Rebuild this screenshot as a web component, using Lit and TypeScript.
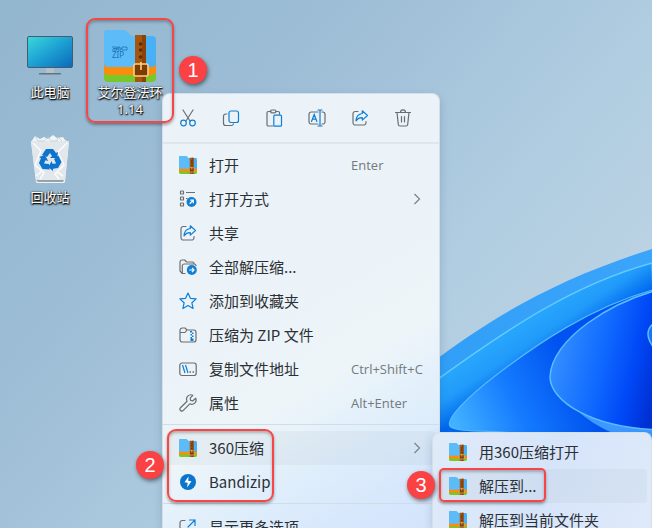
import { LitElement, html, svg, css, nothing, TemplateResult } from "lit";
import { customElement, property } from "lit/decorators.js";

const G = "#6a6e71";
const B = "#0f7fd6";

const zipFolder = svg`
  <path d="M0 4a4 4 0 0 1 4-4h15q2 0 3.500 1.500l3 3q1.500 1.500 3.500 1.500h19a4 4 0 0 1 4 4v30H0z" fill="#48b0f4"/>
  <path d="M0 4a4 4 0 0 1 4-4h15q2 0 3.500 1.500l3 3q1.500 1.500 3.500 1.500h6v34H0z" fill="#5cbcf7"/>
  <path d="M0 42h52v6a4 4 0 0 1-4 4H4a4 4 0 0 1-4-4z" fill="#79c82b"/>
  <path d="M0 33q0 4 4 4h44q4 0 4-4v8q0 4-4 4H4q-4 0-4-4z" fill="#fb8c0c"/>
  <path d="M31 5h11v47H31z" fill="#a5560f"/>
  <path d="M38 5h4v47h-4z" fill="#8c430a"/>
  <circle cx="36.500" cy="14" r="1.800" fill="#5f2c05"/><circle cx="36.500" cy="20" r="1.800" fill="#5f2c05"/><circle cx="36.500" cy="27" r="1.800" fill="#5f2c05"/>
  <rect x="30" y="34" width="14" height="12" rx="1.500" fill="#7c3c08" stroke="#ffd27a" stroke-width="1.600"/>
  <path d="M37 32v8" stroke="#ffd27a" stroke-width="1.600"/>`;

const share = svg`<g fill="none" stroke-width="1.200" stroke-linejoin="round" stroke-linecap="round">
  <path d="M7 2.500H4.200A2.200 2.200 0 0 0 2 4.700v9A2.300 2.300 0 0 0 4.300 16h8.400a2.300 2.300 0 0 0 2.300-2.300V12.500" stroke="${G}"/>
  <path d="M11.300 1.800 16.500 6.500l-5.200 4.600V8.600C8.500 8.500 6.600 9.500 5 11.800 5.300 7.600 7.700 4.900 11.300 4.500z" stroke="${B}"/></g>`;

const icons: Record<string, TemplateResult> = {
  zip: svg`<g transform="scale(.346)">${zipFolder}</g>`,
  cut: svg`<g fill="none" stroke-width="1.200" stroke-linecap="round"><path d="M4 1l7.200 11.200M14 1 6.800 12.200" stroke="${G}"/><circle cx="4.500" cy="14" r="2.800" stroke="${B}"/><circle cx="13.500" cy="14" r="2.800" stroke="${B}"/></g>`,
  copy: svg`<g fill="none" stroke-width="1.200"><path d="M5 5H3.800A2.300 2.300 0 0 0 1.500 7.300v6.900a2.300 2.300 0 0 0 2.300 2.300h5.400a2.300 2.300 0 0 0 2.300-1.700" stroke="${G}" stroke-linecap="round"/><rect x="7" y="2" width="9.500" height="11.500" rx="2" stroke="${B}"/></g>`,
  paste: svg`<g fill="none" stroke-width="1.200"><path d="M6 2.500H3.300A1.300 1.300 0 0 0 2 3.800v11.900A1.300 1.300 0 0 0 3.300 17H8M11 2.500h2.200A1.300 1.300 0 0 1 14.500 3.800v1.500" stroke="${G}" stroke-linecap="round"/><rect x="5.500" y="1" width="5.500" height="2.800" rx="1.200" stroke="${G}"/><rect x="8.800" y="6.200" width="7.700" height="11" rx="1" stroke="${B}"/></g>`,
  rename: svg`<g fill="none" stroke-width="1.200" stroke-linecap="round"><path d="M10 3H3.300A2.300 2.300 0 0 0 1 5.300v7.400A2.300 2.300 0 0 0 3.300 15H10M14 3h.7A2.300 2.300 0 0 1 17 5.300v7.400A2.300 2.300 0 0 1 14.700 15H14" stroke="${G}"/><path d="M12 1v16M10 1h4M10 17h4M3.500 12.500 6.200 5.500 8.900 12.500M4.500 10.200h3.400" stroke="${B}"/></g>`,
  share,
  trash: svg`<g fill="none" stroke="${G}" stroke-width="1.200" stroke-linecap="round" stroke-linejoin="round"><path d="M1.500 3.500h15M6.500 3.300C6.500 0 11.500 0 11.500 3.300M3 3.500l1.300 12A1.700 1.700 0 0 0 6 17h6a1.700 1.700 0 0 0 1.700-1.500l1.300-12M7.500 7.500v5.500M10.500 7.500v5.500"/></g>`,
  openWith: svg`<g fill="none" stroke="${G}" stroke-width="1.200"><rect x="1.500" y="1" width="3" height="3" rx=".6"/><rect x="1.500" y="7" width="3" height="3" rx=".6"/><rect x="1.500" y="13" width="3" height="3" rx=".6"/><path d="M7 2.500h9M7 8.500h1.500"/></g><circle cx="12.500" cy="12" r="5" fill="${B}"/><path d="M10.700 13.800l3.400-3.400M11.300 10.200h3v3" fill="none" stroke="#fff" stroke-width="1.300"/>`,
  extract: svg`<g fill="none" stroke="${G}" stroke-width="1.200" stroke-linejoin="round"><path d="M6.500 15.500H3.300L1 13V4a2 2 0 0 1 2-2h2.700L7.500 4h6A1.500 1.500 0 0 1 15 5.500V6"/><path d="M3.300 15.500V8a2 2 0 0 1 2-2H15a2 2 0 0 1 2 2"/></g><circle cx="12.800" cy="12" r="5" fill="${B}"/><path d="M10.300 12h4.600M13 9.900l2 2.100-2 2.100" fill="none" stroke="#fff" stroke-width="1.200"/>`,
  star: svg`<path d="M9 1l2.400 5.300 5.800.6-4.300 3.900 1.200 5.700L9 13.600l-5.100 2.900 1.200-5.700L.8 6.900l5.800-.6z" fill="none" stroke="${B}" stroke-width="1.200" stroke-linejoin="round"/>`,
  toZip: svg`<path d="M1 4.300A2.300 2.300 0 0 1 3.300 2H6l2 2h6.700A2.300 2.300 0 0 1 17 6.300v7.400a2.300 2.300 0 0 1-2.300 2.300H3.300A2.300 2.300 0 0 1 1 13.700zM1 6.500h5L8 4" fill="none" stroke="${G}" stroke-width="1.200" stroke-linejoin="round"/><path d="M11 5h2v1.500h1.500V8H13v1.500h1.500V11H13v1.500h1.500V15h-3v-4H13V9.500h-1.500V8H13V6.500h-2z" fill="${B}"/>`,
  path: svg`<rect x=".8" y="3" width="16.400" height="12.500" rx="2.200" fill="none" stroke="${G}" stroke-width="1.200"/><path d="M3.500 5l2.500 8M6.500 5 9 13" stroke="${B}" stroke-width="1.200"/><path d="M10.500 12h1.500M13.500 12H15" stroke="${G}" stroke-width="1.400"/>`,
  wrench: svg`<path d="M16.700 4.200a4.300 4.300 0 0 1-5.900 5.600l-6.500 6.600a1.900 1.900 0 0 1-2.800-2.700l6.600-6.500A4.300 4.300 0 0 1 13.800 1.300L11.200 4.100l.4 2.300 2.300.4z" fill="none" stroke="${G}" stroke-width="1.200" stroke-linejoin="round"/>`,
  bandizip: svg`<circle cx="9" cy="9" r="8" fill="#0b74cc"/><path d="M9.500 3.500 5.500 9.200l3.200.5-.6 4.800 4.400-6.200-3.200-.5z" fill="#fff"/>`,
  more: svg`<g fill="none" stroke-width="1.200" stroke-linecap="round"><path d="M6 2.500H3.300A2.300 2.300 0 0 0 1 4.800v9.900A2.300 2.300 0 0 0 3.300 17h9.900a2.300 2.300 0 0 0 2.300-2.300V12" stroke="${G}"/><path d="M9 9l7-7M10.500 2H16v5.500" stroke="${B}"/></g>`,
  chevron: svg`<path d="M9.500 4l5 5-5 5" fill="none" stroke="#7c8185" stroke-width="1.200"/>`,
};

@customElement("ui-icon")
class UiIcon extends LitElement {
  @property() name = "";
  static styles = css`
    :host { display: block; width: 18px; height: 18px; }
    .glyph { display: block; width: 100%; height: 100%; }
  `;
  render() {
    return html`<svg class="glyph" viewBox="0 0 18 18" aria-hidden="true">${icons[this.name]}</svg>`;
  }
}

interface Item { icon: string; label: string; key?: string; sub?: boolean; active?: boolean; }

const fileItems: Item[] = [
  { icon: "zip", label: "打开", key: "Enter" },
  { icon: "openWith", label: "打开方式", sub: true },
  { icon: "share", label: "共享" },
  { icon: "extract", label: "全部解压缩..." },
  { icon: "star", label: "添加到收藏夹" },
  { icon: "toZip", label: "压缩为 ZIP 文件" },
  { icon: "path", label: "复制文件地址", key: "Ctrl+Shift+C" },
  { icon: "wrench", label: "属性", key: "Alt+Enter" },
];
const archiverItems: Item[] = [
  { icon: "zip", label: "360压缩", sub: true, active: true },
  { icon: "bandizip", label: "Bandizip" },
];
const moreItems: Item[] = [{ icon: "more", label: "显示更多选项" }];
const subItems: Item[] = [
  { icon: "zip", label: "用360压缩打开" },
  { icon: "zip", label: "解压到...", active: true },
  { icon: "zip", label: "解压到当前文件夹" },
];
const tools = [
  ["cut", "剪切"], ["copy", "复制"], ["paste", "粘贴"],
  ["rename", "重命名"], ["share", "共享"], ["trash", "删除"],
];

@customElement("app-root")
class AppRoot extends LitElement {
  static styles = css`
    :host {
      display: block; position: relative; min-height: 100vh; overflow: hidden;
      font: 15px/20px "Noto Sans CJK SC", sans-serif; color: #2b3035;
    }
    button { border: 0; padding: 0; margin: 0; background: none; font: inherit; color: inherit; }
    .wallpaper { position: absolute; inset: 0; width: 100%; height: 100%; }
    .desktop {
      position: relative; display: grid; grid-template-columns: 80px 80px;
      grid-auto-rows: 105px; padding: 28px 10px;
    }
    .shortcut {
      display: flex; flex-direction: column; align-items: center; justify-content: flex-start; gap: 2px;
      font: 13px/17px "Noto Sans", "Noto Sans CJK SC", sans-serif; color: #fff;
      text-shadow: 0 1px 2px #000, 1px 1px 1px #222, 0 0 2px #333;
    }
    .caption { display: flex; flex-direction: column; align-items: center; }
    .art { width: 54px; height: 54px; text-shadow: none; }
    .mark { font: 8px "Noto Sans", sans-serif; fill: #1c71b4; }
    .menu {
      position: absolute; box-sizing: border-box; border: 1px solid #d3e0e8; border-bottom: 0; border-radius: 8px 8px 0 0;
      box-shadow: 0 4px 10px rgb(40 70 110 / 22%);
    }
    .context {
      left: 162px; top: 93px; bottom: 0; width: 278px;
      background: linear-gradient(150deg, #ebf3f8 0 45%, #edf5f9 64%, #dfeefb 78%, #d6e6fc 92%, #d4e5fb);
    }
    .submenu {
      left: 432px; top: 432px; bottom: 0; width: 220px; padding: 2px 4px;
      background: linear-gradient(110deg, #e0ebf9, #d6e4fa 50%, #deeafa);
    }
    .tools { display: grid; grid-template-columns: repeat(6, 43px); padding: 0 3px; height: 48px; border-bottom: 2px solid #dde6eb; }
    .tool { display: grid; place-items: center; }
    .group { padding: 4px; }
    .group + .group { padding-top: 6px; border-top: 1px solid #cfdde7; }
    .row {
      display: grid; grid-template-columns: 18px 1fr auto; column-gap: 12px; align-items: center;
      width: 100%; height: 34px; padding: 0 12px; text-align: left; border-radius: 4px; white-space: nowrap;
    }
    .active { background: rgb(80 90 100 / 5%); }
    .key { width: 72px; font: 13px/20px "Open Sans", "Noto Sans", sans-serif; color: #73797d; }
    .callout {
      position: absolute; box-sizing: border-box; border: 2px solid #f84545; border-radius: 9px;
      box-shadow: 0 2px 3px rgb(0 0 0 / 35%), inset 0 2px 3px rgb(0 0 0 / 25%);
    }
    .badge {
      position: absolute; width: 28px; height: 28px; border-radius: 50%; background: #fa4144; color: #fff;
      font: 20px/28px "Liberation Sans", sans-serif; text-align: center; box-shadow: 1px 2px 4px rgb(0 0 0 / 50%);
    }
    .box1 { left: 86px; top: 18px; width: 88px; height: 105px; }
    .box2 { left: 167px; top: 429px; width: 107px; height: 73px; }
    .box3 { left: 439px; top: 468px; width: 107px; height: 34px; border-radius: 5px; }
    .badge1 { left: 179px; top: 56px; }
    .badge2 { left: 136px; top: 451px; }
    .badge3 { left: 407px; top: 471px; }
  `;

  row(i: Item) {
    return html`<button class="row ${i.active ? "active" : ""}" role="menuitem">
      <ui-icon name=${i.icon}></ui-icon><span>${i.label}</span>
      ${i.key ? html`<span class="key">${i.key}</span>` : i.sub ? html`<ui-icon name="chevron"></ui-icon>` : nothing}
    </button>`;
  }

  wallpaper() {
    return html`<svg class="wallpaper" viewBox="0 0 652 528" preserveAspectRatio="xMidYMid slice" aria-hidden="true">
      <defs>
        <linearGradient id="sky" x1="0" y1="0" x2="1" y2=".7"><stop stop-color="#93b6cf"/><stop offset=".35" stop-color="#9dbdd6"/><stop offset=".7" stop-color="#b0cde1"/><stop offset="1" stop-color="#c0d5e3"/></linearGradient>
        <linearGradient id="rim" x1="0" y1="1" x2="1" y2="0"><stop stop-color="#2d9df6"/><stop offset="1" stop-color="#3ba4fb"/></linearGradient>
        <linearGradient id="band" gradientUnits="userSpaceOnUse" x1="535" y1="310" x2="562" y2="350"><stop stop-color="#29a8fc"/><stop offset=".5" stop-color="#219bfa"/><stop offset="1" stop-color="#0068f0"/></linearGradient>
        <linearGradient id="petal" gradientUnits="userSpaceOnUse" x1="455" y1="425" x2="570" y2="370"><stop stop-color="#42b2ff"/><stop offset=".5" stop-color="#147bff"/><stop offset="1" stop-color="#0053f0"/></linearGradient>
        <linearGradient id="core" gradientUnits="userSpaceOnUse" x1="550" y1="370" x2="655" y2="395"><stop stop-color="#348fff"/><stop offset=".45" stop-color="#0f69ff"/><stop offset=".75" stop-color="#0048f6"/><stop offset="1" stop-color="#002fd2"/></linearGradient>
      </defs>
      <path d="M0 0h652v528H0z" fill="url(#sky)"/>
      <path d="M430 364C497 313 563 277 652 249V528H430z" fill="url(#rim)"/>
      <path d="M430 385C512 325 576 284 652 263L660 528H430z" fill="url(#band)" stroke="#62cbff" stroke-width="1.300"/>
      <path d="M660 288C590 306 533 347 495 376 470 395 445 419 450 426 455 433 500 430 520 434H660z" fill="url(#petal)" stroke="#52b8ff" stroke-width="1.300"/>
      <path d="M575 408C590 424 620 440 652 444V425z" fill="#3d99ff"/>
      <path d="M670 287C610 300 551 340 550 377 550 400 590 430 670 430z" fill="url(#core)" stroke="#5bbcff" stroke-width="1.500"/>
      <path d="M654 323q-12 9 0 25" fill="#1873ff" stroke="#5bbcff" stroke-width="1.500"/>
    </svg>`;
  }

  render() {
    return html`
      ${this.wallpaper()}
      <main class="desktop">
        <button class="shortcut">
          <svg class="art" viewBox="0 0 54 54" aria-hidden="true">
            <defs><linearGradient id="screen" x1="0" y1="0" x2="1" y2="1"><stop stop-color="#3ad9dc"/><stop offset=".5" stop-color="#1da0d3"/><stop offset="1" stop-color="#0b68b8"/></linearGradient></defs>
            <rect x="4.500" y="8.500" width="45" height="31" rx="1.500" fill="url(#screen)" stroke="#465c6c"/>
            <path d="M23 40h8v5h-8z" fill="#b5c0c9"/><path d="M16 45h22v1.500H16z" fill="#66727c"/>
          </svg>
          <span>此电脑</span>
        </button>
        <button class="shortcut">
          <svg class="art" viewBox="-1 -2 54 54" aria-hidden="true">
            ${zipFolder}
            <g fill="none" stroke="#1c71b4"><path d="M8 17h5v3H8M13 18.500H9M16 17h-2v3h3v-2h-3M18 17h5v3h-5z" stroke-width=".8"/></g>
            <text class="mark" x="8" y="28">ZIP</text>
          </svg>
          <span class="caption"><span>艾尔登法环</span><span>1.14</span></span>
        </button>
        <button class="shortcut">
          <svg class="art" viewBox="0 0 54 54" aria-hidden="true">
            <path d="M8 9l4-6 5 3 4-2 4 2 5-4 4 3 6-1 2 3 4 2-4 40q-1 1-2 1H15q-2 0-2-1z" fill="#f1f4f6"/>
            <path d="M8 8h38l-4 39q0 1-2 1H15q-2 0-2-1z" fill="#e2e7eb"/>
            <path d="M12 3l3 5h6l4-4 3 4h6l1-4 4 4" fill="none" stroke="#c3ccd3" stroke-width=".8"/>
            <path d="M10 10l8 8-6 14 9 8-4 6M44 10l-9 9 6 13-9 9 4 5M13 43l6-5M40 43l-6-4" fill="none" stroke="#f9fbfc" stroke-width="1.600"/>
            <path d="M13 47h28l-1 2H15z" fill="#98a2a9"/>
            ${[0, 120, 240].map((turn) => svg`<path transform="rotate(${turn} 27 27)" fill="#0c74cf" d="M19 22l4-6h7l3 4 2-1-1 6-7 0 2-2-2-3-3 4z"/>`)}
          </svg>
          <span>回收站</span>
        </button>
      </main>

      <nav class="menu context" role="menu" aria-label="文件">
        <div class="tools">
          ${tools.map(([icon, label]) => html`<button class="tool" aria-label=${label}><ui-icon name=${icon}></ui-icon></button>`)}
        </div>
        <div class="group">${fileItems.map((i) => this.row(i))}</div>
        <div class="group">${archiverItems.map((i) => this.row(i))}</div>
        <div class="group">${moreItems.map((i) => this.row(i))}</div>
      </nav>
      <nav class="menu submenu" role="menu" aria-label="360压缩">${subItems.map((i) => this.row(i))}</nav>

      <div class="callout box1"></div><div class="badge badge1">1</div>
      <div class="callout box2"></div><div class="badge badge2">2</div>
      <div class="callout box3"></div><div class="badge badge3">3</div>
    `;
  }
}
